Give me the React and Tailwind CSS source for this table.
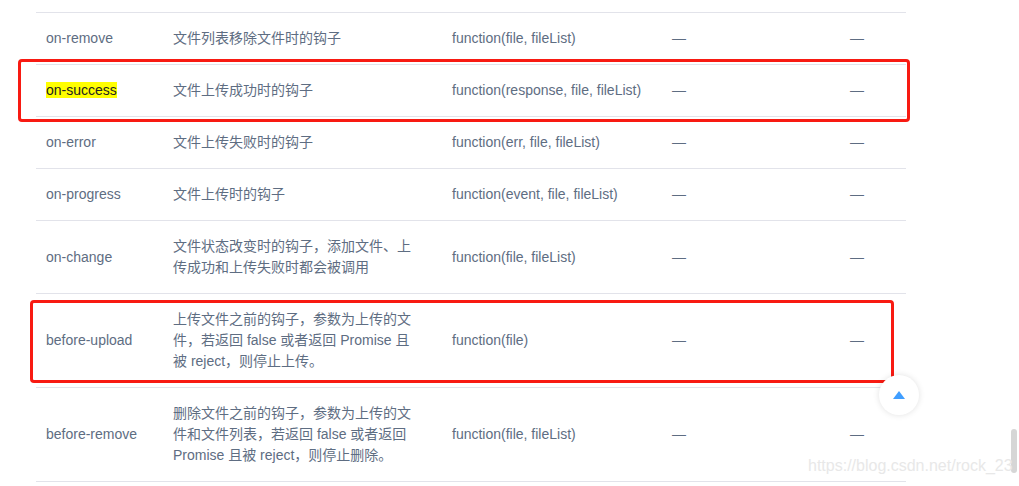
import React from "react";

const rows = [
  { name: "on-remove", desc: ["文件列表移除文件时的钩子"], type: "function(file, fileList)" },
  { name: "on-success", desc: ["文件上传成功时的钩子"], type: "function(response, file, fileList)", mark: true },
  { name: "on-error", desc: ["文件上传失败时的钩子"], type: "function(err, file, fileList)" },
  { name: "on-progress", desc: ["文件上传时的钩子"], type: "function(event, file, fileList)" },
  {
    name: "on-change",
    desc: ["文件状态改变时的钩子，添加文件、上", "传成功和上传失败时都会被调用"],
    type: "function(file, fileList)",
  },
  {
    name: "before-upload",
    desc: ["上传文件之前的钩子，参数为上传的文", "件，若返回 false 或者返回 Promise 且", "被 reject，则停止上传。"],
    type: "function(file)",
  },
  {
    name: "before-remove",
    desc: ["删除文件之前的钩子，参数为上传的文", "件和文件列表，若返回 false 或者返回", "Promise 且被 reject，则停止删除。"],
    type: "function(file, fileList)",
  },
];

function Row({ row }) {
  return (
    <div className="flex items-center border-b border-[#e2e3ea] py-[15px]">
      <div className="w-[127px] pl-[10px]">
        {row.mark ? <span className="bg-[#ffff00] text-[#222]">{row.name}</span> : row.name}
      </div>
      <div className="w-[279px] pl-[10px]">
        {row.desc.map((l, i) => (
          <div key={i} className="whitespace-nowrap">{l}</div>
        ))}
      </div>
      <div className="w-[220px] pl-[10px] whitespace-nowrap">{row.type}</div>
      <div className="w-[178px] pl-[10px]">—</div>
      <div className="w-[66px] pl-[10px]">—</div>
    </div>
  );
}

export default function App() {
  return (
    <div
      className="relative w-[1019px] h-[486px] overflow-hidden bg-white text-[14px] leading-[21px] text-[#5e6d82]"
      style={{ fontFamily: '"Liberation Sans", Arial, "Noto Sans CJK SC", sans-serif' }}
    >
      <div className="ml-[36px] w-[870px]">
        <div className="h-[13px] border-b border-[#e2e3ea]" />
        {rows.map((r) => (
          <Row key={r.name} row={r} />
        ))}
      </div>

      {/* red annotation boxes */}
      <div className="absolute left-[18px] top-[59px] w-[892px] h-[63px] border-[3px] border-[#f81a12] rounded-[4px]" />
      <div className="absolute left-[30px] top-[300px] w-[864px] h-[83px] border-[3px] border-[#f81a12] rounded-[4px]" />

      {/* back to top */}
      <div className="absolute left-[879px] top-[375px] w-[40px] h-[40px] rounded-full bg-white shadow-[0_0_6px_rgba(0,0,0,0.12)] flex items-center justify-center">
        <div className="w-0 h-0 border-l-[6px] border-r-[6px] border-b-[8px] border-l-transparent border-r-transparent border-b-[#409eff] -mt-[1px]" />
      </div>

      {/* scrollbar */}
      <div className="absolute left-[1011px] top-[429px] w-[6px] h-[44px] rounded-[3px] bg-[#d6d6d6]" />

      {/* watermark */}
      <div className="absolute left-[808px] top-[456px] text-[16px] leading-[19px] text-[#e8e8e8] whitespace-nowrap">
        https://blog.csdn.net/rock_23
      </div>
    </div>
  );
}
